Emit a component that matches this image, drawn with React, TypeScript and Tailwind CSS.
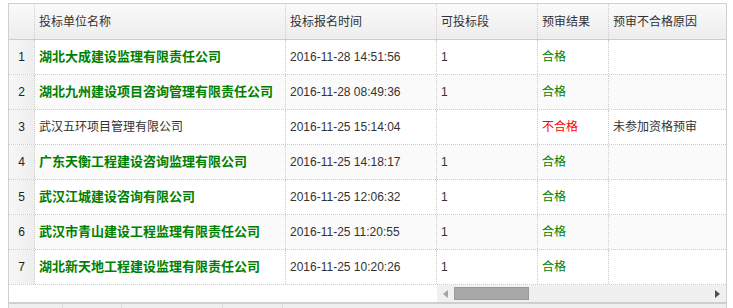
import React from 'react'

interface Row {
  name: string
  time: string
  section: string
  result: string
  reason: string
}

const rows: Row[] = [
  { name: '湖北大成建设监理有限责任公司', time: '2016-11-28 14:51:56', section: '1', result: '合格', reason: '' },
  { name: '湖北九州建设项目咨询管理有限责任公司', time: '2016-11-28 08:49:36', section: '1', result: '合格', reason: '' },
  { name: '武汉五环项目管理有限公司', time: '2016-11-25 15:14:04', section: '', result: '不合格', reason: '未参加资格预审' },
  { name: '广东天衡工程建设咨询监理有限公司', time: '2016-11-25 14:18:17', section: '1', result: '合格', reason: '' },
  { name: '武汉江城建设咨询有限公司', time: '2016-11-25 12:06:32', section: '1', result: '合格', reason: '' },
  { name: '武汉市青山建设工程监理有限责任公司', time: '2016-11-25 11:20:55', section: '1', result: '合格', reason: '' },
  { name: '湖北新天地工程建设监理有限责任公司', time: '2016-11-25 10:20:26', section: '1', result: '合格', reason: '' },
]

const cjk = "font-['Liberation_Sans','Noto_Sans_CJK_SC',sans-serif]"
const cell = 'h-full flex items-center px-[4px] border-r border-dotted border-[#ccc] shrink-0 whitespace-nowrap overflow-hidden'

export default function App() {
  return (
    <div className={`w-[733px] h-[308px] bg-white pt-[3px] pl-[8px] overflow-hidden ${cjk}`}>
      <div className="w-[719px] border-x border-t border-[#d0d0d0] text-[12px] text-[#333]">
        {/* header */}
        <div className="flex h-[36px] border-b border-[#ccc] bg-gradient-to-b from-[#fafafa] to-[#ededed]">
          <div className={`${cell} w-[26px]`} />
          <div className={`${cell} w-[251px]`}>投标单位名称</div>
          <div className={`${cell} w-[151px]`}>投标报名时间</div>
          <div className={`${cell} w-[101px]`}>可投标段</div>
          <div className={`${cell} w-[71px]`}>预审结果</div>
          <div className="h-full flex items-center px-[4px] w-[117px]">预审不合格原因</div>
        </div>

        {/* body */}
        {rows.map((r, i) => {
          const ok = r.result === '合格'
          return (
            <div
              key={i}
              className={`flex h-[35px] border-b border-dotted border-[#ccc] ${i % 2 === 1 ? 'bg-[#fafafa]' : 'bg-white'}`}
            >
              <div className={`${cell} w-[26px] justify-center bg-gradient-to-r from-[#f7f7f7] to-[#eeeeee] text-[#222]`}>
                {i + 1}
              </div>
              <div className={`${cell} w-[251px] ${ok ? 'text-[13px] font-bold text-[#008000]' : ''}`}>{r.name}</div>
              <div className={`${cell} w-[151px]`}>{r.time}</div>
              <div className={`${cell} w-[101px]`}>{r.section}</div>
              <div className={`${cell} w-[71px] ${ok ? 'text-[#008000]' : 'text-[#ff0000]'}`}>{r.result}</div>
              <div className="h-full flex items-center px-[4px] w-[117px] whitespace-nowrap">{r.reason}</div>
            </div>
          )
        })}

        {/* horizontal scrollbar */}
        <div className="flex h-[17px]">
          <div className="w-[428px] bg-white" />
          <div className="flex-1 flex items-center bg-[#f0f0f0]">
            <div className="w-[17px] h-full flex items-center justify-center">
              <svg width="5" height="8" viewBox="0 0 5 8">
                <path d="M5 0 L0 4 L5 8 Z" fill="#a3a3a3" />
              </svg>
            </div>
            <div className="w-[75px] h-[13px] bg-[#a8a8a8] border border-[#999]" />
            <div className="flex-1" />
            <div className="w-[17px] h-full flex items-center justify-center">
              <svg width="5" height="8" viewBox="0 0 5 8">
                <path d="M0 0 L5 4 L0 8 Z" fill="#505050" />
              </svg>
            </div>
          </div>
        </div>

        {/* pager */}
        <div className="flex h-[10px] border-t-2 border-[#cfcfcf] bg-[#efefef]">
          <div className="w-[54px] border-r border-[#dcdcdc]" />
          <div className="w-[59px] border-r border-[#dcdcdc]" />
          <div className="w-[101px] border-r border-[#dcdcdc]" />
          <div className="w-[60px] border-r border-[#dcdcdc]" />
        </div>
      </div>
    </div>
  )
}
